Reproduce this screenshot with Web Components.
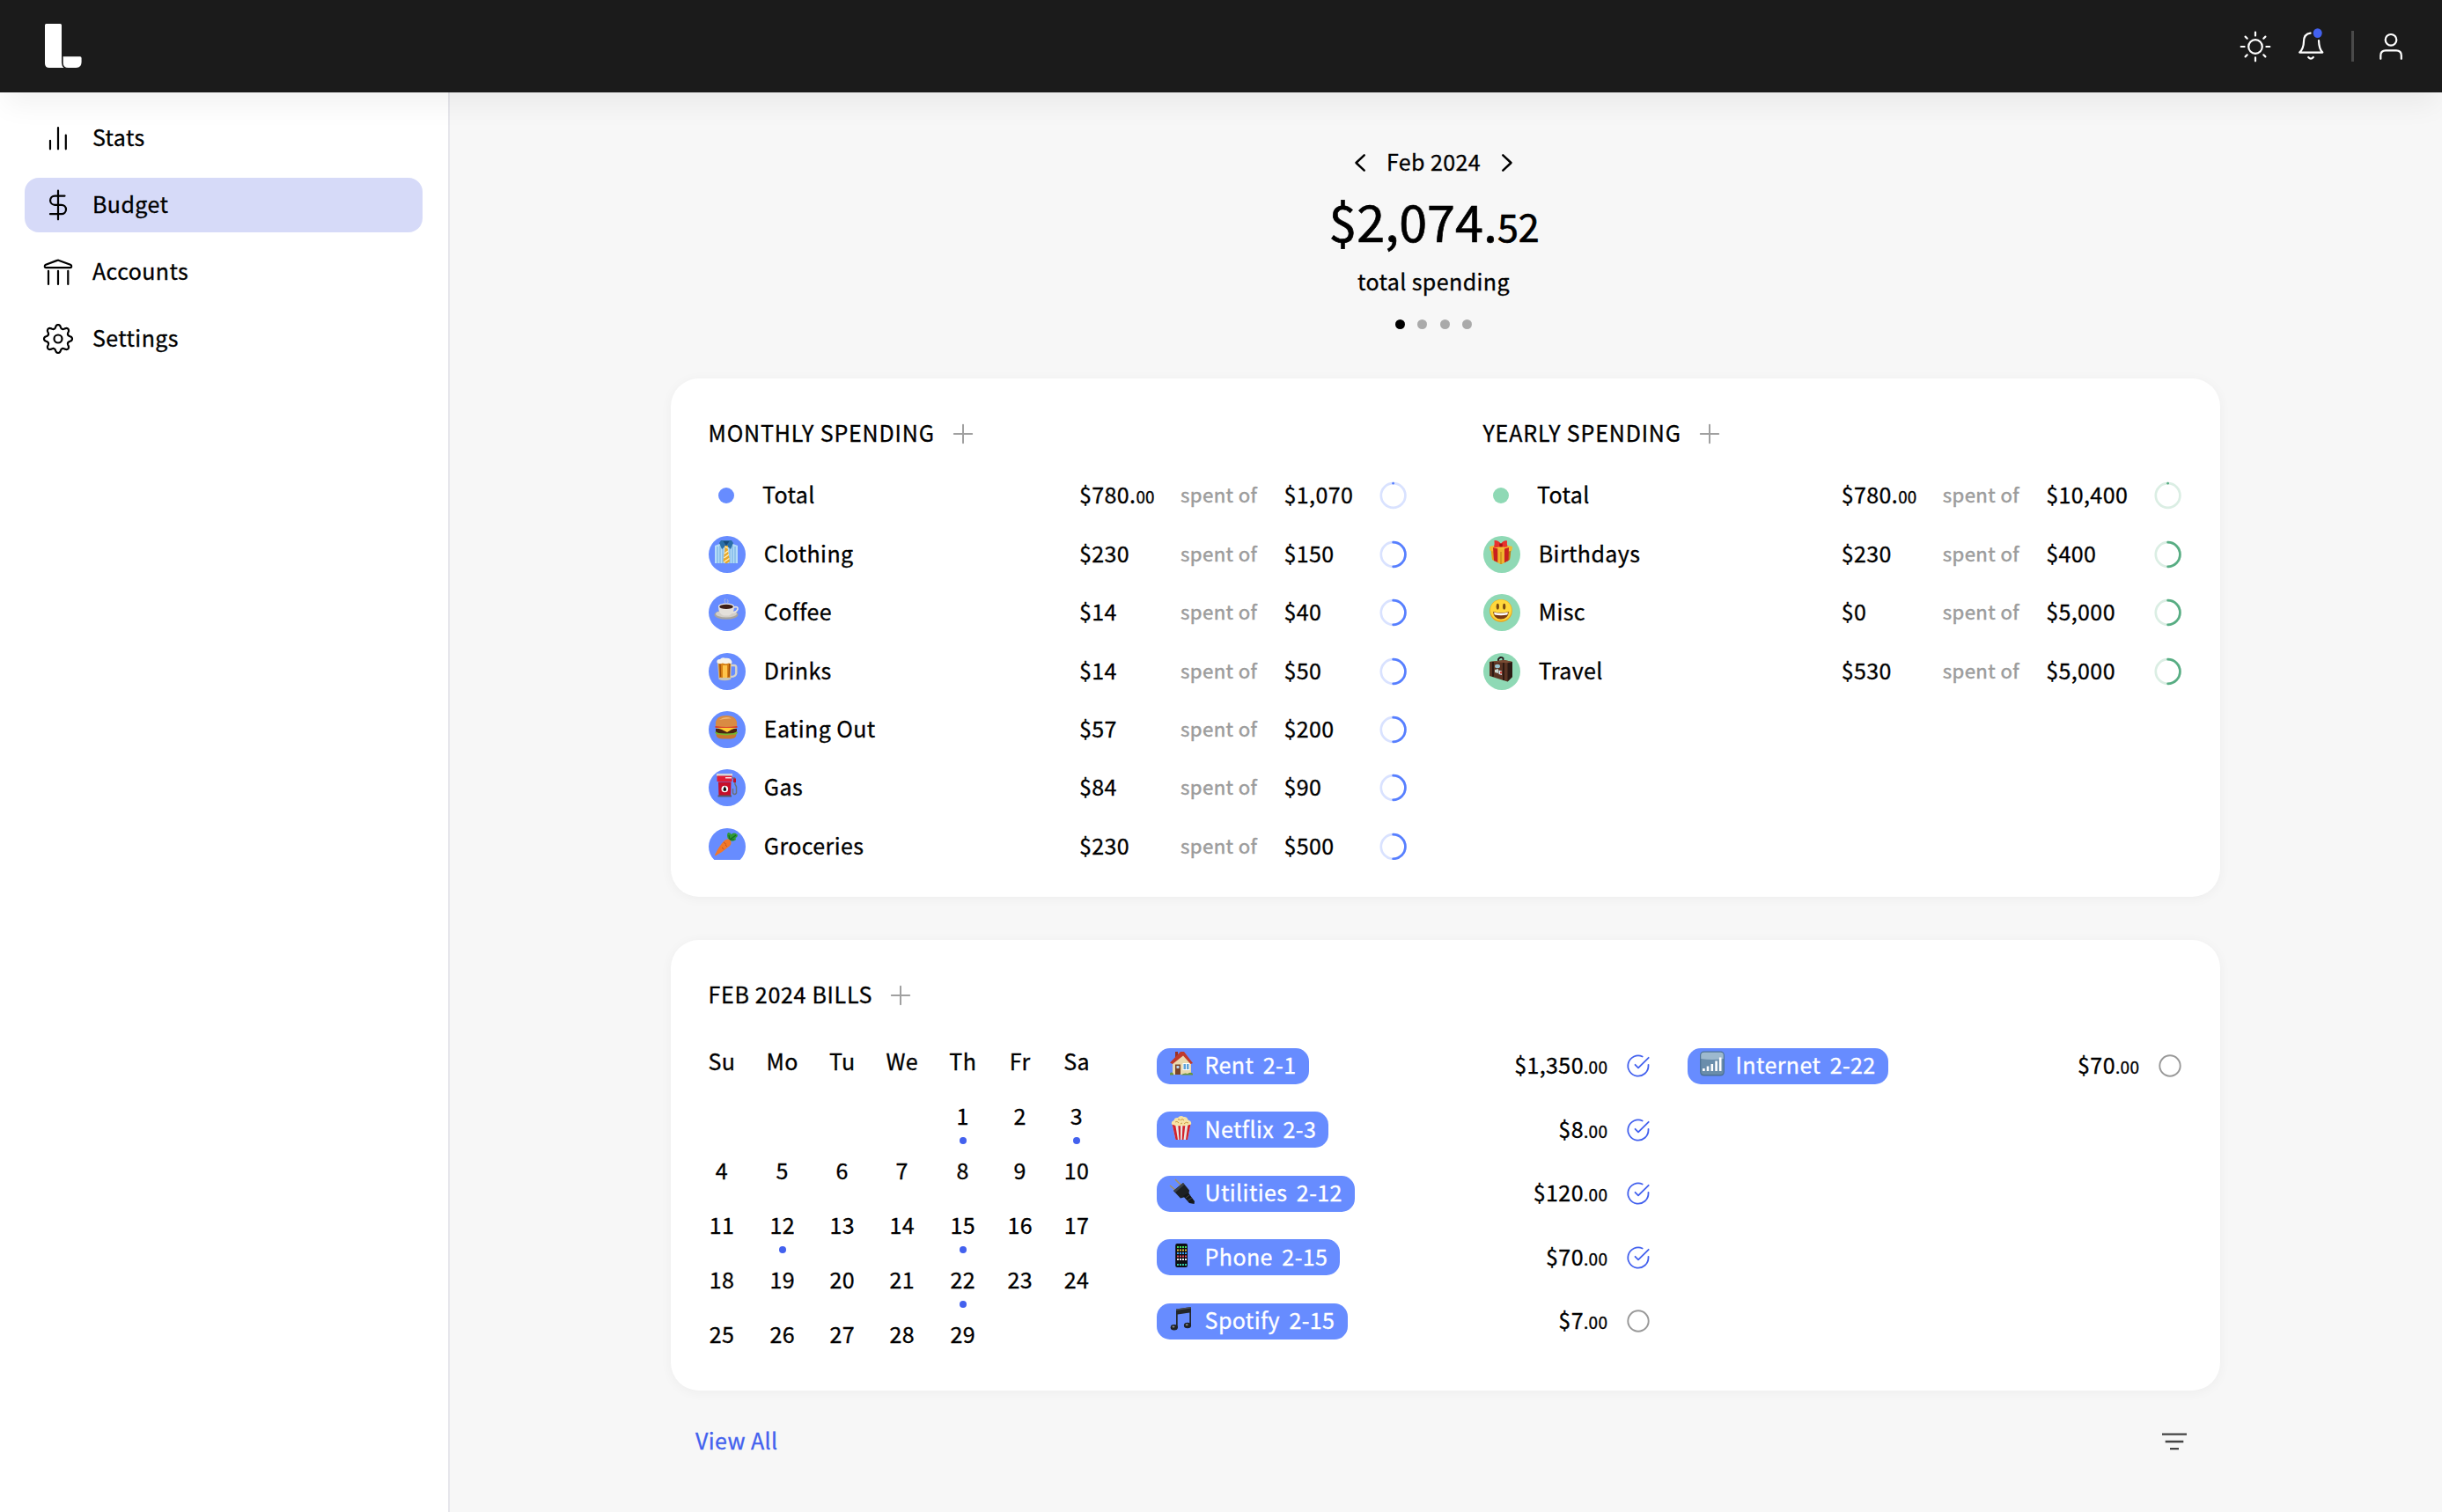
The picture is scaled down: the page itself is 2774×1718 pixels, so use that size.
<!DOCTYPE html>
<html lang="en">
<head>
<meta charset="utf-8">
<title>Budget</title>
<style>
  html, body { margin: 0; height: 100%; }
  body {
    --ink: #000; --muted: #9c9c9c; --accent: #4361ee; --blue: #678cff; --green: #8fd9b5;
    background: #f7f7f7; color: var(--ink);
    font-family: "Noto Sans CJK SC", "Open Sans", sans-serif;
    font-size: 25px; line-height: 30px; letter-spacing: 0.4px;
    -webkit-text-stroke: 0.32px currentColor;
    overflow: hidden;
  }
</style>
</head>
<body>
<budget-app></budget-app>
<script>
const define = (name, css, render) => customElements.define(name, class extends HTMLElement {
  constructor() { super(); this.attachShadow({ mode: 'open' }); }
  connectedCallback() {
    this.shadowRoot.innerHTML = `<style>*{box-sizing:border-box}.t{padding-bottom:4px;white-space:nowrap}${css}</style>${render(this)}`;
  }
});

/* Eight-lobed gear outline around the centre of a 36-unit box */
const gearPath = (() => {
  const pts = [];
  for (let i = 0; i < 160; i++) {
    const a = i / 160 * 2 * Math.PI, w = Math.cos(8 * a);
    const r = 14 + 2 * Math.sign(w) * Math.pow(Math.abs(w), 0.75);
    pts.push((18 + r * Math.sin(a)).toFixed(2) + ' ' + (18 - r * Math.cos(a)).toFixed(2));
  }
  return 'M' + pts.join('L') + 'Z';
})();

const icons = {
  logo: [42, 50, '<path fill="#fff" stroke="none" d="M1.5 0H17.5Q19 0 19 1.5V44Q19 48 21.5 50H5Q0 50 0 45V1.5Q0 0 1.5 0Z"/><path fill="#fff" stroke="none" d="M20.7 37.3H40Q41.6 37.3 41.6 39V43.5Q41.6 50 35.5 50H26.5Q20.7 50 20.7 44Z"/>'],
  stats: [36, 36, '<path d="M9 20.8V30.3M18 6.2V30.3M26.8 14.6V30.3"/>'],
  dollar: [36, 36, '<path d="M18 1.7V34.3M25.5 7.6H14.2a5.1 5.1 0 0 0 0 10.2h7.6a5.1 5.1 0 0 1 0 10.4H9"/>'],
  bank: [36, 36, '<path d="M17 4.9Q18 4.5 19 4.9L32 9.8Q33.4 10.5 33.2 12Q33 13.2 31.8 13.2H4.2Q3 13.2 2.8 12Q2.6 10.5 4 9.8ZM7 16.8V32M18 16.8V32M29.3 16.8V32"/>'],
  gear: [36, 36, `<circle cx="18" cy="18" r="4.5"/><path d="${gearPath}"/>`],
  sun: [36, 36, '<circle cx="18" cy="18" r="7.8"/><path d="M18 1.7V5.6M18 30.4V34.3M1.7 18H5.6M30.4 18H34.3M6.6 6.6L8.7 8.7M27.3 27.3L29.4 29.4M29.4 6.6L27.3 8.7M8.7 27.3L6.6 29.4"/>'],
  bell: [36, 36, '<path d="M17.6 3.6C12.3 4.2 10.1 8 10 13C9.9 18.5 8.3 22.6 5.2 25.6H31.3C28.3 22.5 27.2 18 27 12.1M15.2 31Q18 34.2 20.8 31"/><ellipse cx="25.7" cy="3.6" rx="5" ry="5.4" fill="#4361ee" stroke="none"/>'],
  user: [36, 36, '<circle cx="18" cy="10.3" r="6.3"/><path d="M6.3 31.8V28Q6.3 22.3 12 22.3H24Q29.8 22.3 29.8 28V31.8"/>'],
  left: [12, 20, '<path stroke-width="2.5" d="M10.7 1.4L1.5 10L10.7 18.6"/>'],
  right: [12, 20, '<path stroke-width="2.5" d="M1.3 1.4L10.5 10L1.3 18.6"/>'],
  plus: [24, 24, '<path stroke-width="2" d="M12 1.8V22.2M1.8 12H22.2"/>'],
  done: [28, 28, '<path stroke-width="1.8" d="M25.5 12.8V14A11.6 11.6 0 1 1 18.7 3.5M25.7 4.8L14 16.3L10.5 12.8"/>'],
  open: [28, 28, '<circle cx="14" cy="14" r="11.7" stroke-width="1.9"/>'],
  filter: [30, 20, '<path stroke-width="2.3" stroke-linecap="butt" d="M1 1.7H29M4.7 10H25.3M10 18.2H20"/>'],
};
define('ui-icon', ':host{display:block;flex:none}svg{display:block;fill:none;stroke:currentColor;stroke-width:2.2;stroke-linecap:round;stroke-linejoin:round;overflow:visible}', el => {
  const [w, h, body] = icons[el.getAttribute('name')];
  return `<svg width="${w}" height="${h}" viewBox="0 0 ${w} ${h}">${body}</svg>`;
});

const emoji = {
  shirt: '<path fill="#b5dcf8" d="M0 6L8 3H18L26 6V26H0Z"/><path stroke="#6ba9df" stroke-width="1" d="M3 7V26M6 6V26M9 9V26M17 9V26M20 6V26M23 7V26"/><path fill="#2b6fa8" d="M7 0H19L21 3L18 10L13 6L8 10L5 3Z"/><path fill="#184a78" d="M9.5 1H16.5L13 6Z"/><path fill="#e9a92a" d="M11 6H15L14.6 9L17 24L13 26.5L9.5 24L11.5 9Z"/><path stroke="#fff2c0" stroke-width="1.4" d="M11 15L15 12M10.4 20L16 16M10.5 24.5L16.5 20.5M11.5 7L15 9"/>',
  coffee: '<path stroke="#aab9d8" stroke-width="1" fill="none" d="M12 5Q10 3 12 0M14.5 5Q16 3 14 1"/><ellipse cx="13" cy="18.5" rx="13.5" ry="5.2" fill="#a9a59e"/><ellipse cx="13" cy="17.5" rx="12" ry="4" fill="#d3cfc8"/><path fill="none" stroke="#e6e3de" stroke-width="1.8" d="M21 10Q26.5 8.5 26 12Q25 15.5 20 16"/><path fill="#e4e0da" d="M4 9H22Q22 17 16 19.5H10Q4 17 4 9Z"/><ellipse cx="13" cy="9" rx="9" ry="3.4" fill="#f0ede8"/><ellipse cx="13" cy="9.4" rx="7.8" ry="2.6" fill="#3d1f16"/>',
  beer: '<path fill="none" stroke="#d5d3cb" stroke-width="2.4" d="M18 9H22Q24.5 9 24.3 12V18Q24 22 18 22"/><path fill="#c9c4b4" d="M3 5H19L18.2 25Q11 27.5 4.5 25Z"/><path fill="#d98316" d="M4 5H18L17.3 23H5Z"/><path fill="#ffc44a" d="M9 9H14V23H9Z"/><path stroke="#9e4d09" stroke-width="1.3" d="M6 7L6.6 22M16.6 7L16 22"/><path fill="#f8f3e8" d="M2.5 6Q1.5 2 6 2Q8-.5 12 .8Q18 0 19.5 5Q20 8 16 6.5Q12 8 9 6.5Q5 8 2.5 6Z"/>',
  burger: '<path fill="#c9772f" d="M1.5 20H24.5Q25 26.5 18 26.5H8Q1 26.5 1.5 20Z"/><path fill="#74b72e" d="M0 19Q3 17 6 19.5Q10 17.5 13 20Q17 17.5 20 19.5Q23 17 26 19Q25 22.5 20 21.5L13 22.5L5 21.5Q1 22 0 19Z"/><path fill="#4a2312" d="M1 15H25V18Q23 20.5 13 20.5Q2 20.5 1 18Z"/><path fill="#ffc933" d="M0 13.5H26L19 16L14 19L8 16Z"/><path fill="#d9402b" d="M.5 12H25.5V14H.5Z"/><path fill="#d98b43" d="M1 12Q-.5 0 13 0Q26.5 0 25 12Q13 14 1 12Z"/><path fill="#f0b873" d="M5 5Q12 0 19 3.5Q12 3 5 5Z"/>',
  gas: '<path fill="none" stroke="#6b6f78" stroke-width="1.5" d="M20 5H22.5L23 12L24.5 15V22Q22.5 25 20.5 22V17"/><path fill="#c3102a" d="M21 5.5H24V10H21Z"/><path fill="#d4d6da" d="M2 0H20V3H2Z"/><path fill="#e01e37" d="M2.5 2.5H19.5V9H2.5Z"/><path fill="#fbd9dc" d="M12 4H19V5.5H12Z"/><path fill="#c60f2a" d="M4 9.5H18.5L18 25H4.5Z"/><path fill="#555b66" d="M3.5 24.5H19V26.5H3.5Z"/><circle cx="11.3" cy="17.5" r="3.8" fill="#fff"/><path fill="#111" d="M11.3 14.3Q15 19.8 11.3 20Q7.6 19.8 11.3 14.3Z"/>',
  carrot: '<path fill="#2f9a35" d="M15 7Q13 3 15 0Q18 0 18.5 2Q21-.5 24 1Q24.5 2 26 2.5Q26 5 23.5 6Q25 9 21 9.5Q19 10 17.5 9Z"/><path stroke="#136b23" stroke-width="1.2" d="M17 8L24 3M17 8L16 3M17 8L22 8"/><path fill="#f0782a" d="M11 9Q16 6 18 9.5Q19.5 13 16.5 15.5Q9 22 .5 26.5Q-.5 26 .5 24.5Q5 15 11 9Z"/><path stroke="#c9511a" stroke-width="1" d="M10 11L13 13.5M8 17L10.5 19M14 16L12 14"/>',
  gift: '<path fill="#e3a31b" d="M1.5 10L13 13L24.5 10L23 22L13 27L3 22Z"/><path fill="#b87a0f" d="M13 13L24.5 10L23 22L13 27Z"/><path fill="#f3bb33" d="M0 7L13 4L26 7L25.5 11.5L13 15L.5 11.5Z"/><path fill="#c9201f" d="M4 8L9.5 9.5V25L5 23ZM17 9.5L22 8L21.5 23L17 25.3Z"/><path fill="#efb52f" d="M9.5 10H17V25.5L13 27L9.5 25.5Z"/><path stroke="#b87a0f" stroke-width="1" d="M13 13V27"/><path fill="#e8322e" d="M13 4Q10-.5 5.5 0Q6 4 5 7.5Q10 9 13 6Q16 9 20.5 7Q19.5 4 20 .5Q16-.5 13 4Z"/><path fill="#a81114" d="M11.3 3.5H14.7V7.5H11.3Z"/>',
  smile: '<circle cx="13" cy="13.9" r="12.8" fill="#f0a418"/><circle cx="13" cy="13.2" r="12" fill="#ffd83b"/><ellipse cx="9.3" cy="9.2" rx="1.6" ry="3.4" fill="#7a4a10"/><ellipse cx="16.7" cy="9.2" rx="1.6" ry="3.4" fill="#7a4a10"/><path fill="#7b3b12" d="M4 15Q13 17.5 22 15Q21 23.5 13 23.5Q5 23.5 4 15Z"/><path fill="#fff" d="M5 15.7Q13 17.7 21 15.7L20.3 18.5Q13 20 5.7 18.5Z"/>',
  bag: '<path fill="none" stroke="#24191a" stroke-width="1.8" d="M10 4V2Q12.5-1.5 15.5 1V4"/><path fill="#5b3423" d="M0 5L17 3L26 5V22L20.5 27.5L0 21Z"/><path fill="#2c1a14" d="M20.5 6L26 5V22L20.5 27.5Z"/><path fill="#7a4b33" d="M0 5L17 3L26 5L20.5 6.3Z"/><path stroke="#2b1811" stroke-width="1.8" d="M4 5V22M16 6V26"/><ellipse cx="9" cy="10" rx="3" ry="2.2" fill="#9bc3cf"/><path fill="#c9d8cf" d="M6 14L10 13V18L6 17Z"/><path fill="#d6e3ee" d="M10.5 14.5L14 15.5V20L10.5 19Z"/><path fill="#d0493c" d="M12 16H14V18.5H12Z"/>',
  house: '<path fill="#9a3124" d="M6 0H9V6H6Z"/><path fill="#ead9ae" d="M3 11L14 2L24 12V26H3Z"/><path fill="#c0392b" d="M0 12.5L12 0H16L26 13L23.5 14L15 4.5L3 14Z"/><path fill="#7b4328" d="M6 14.5H12V26H6Z"/><path fill="#b9d9f0" d="M7.5 16H10.5V19H7.5Z"/><path fill="#fff" d="M14.5 13H22.5V21H14.5Z"/><path fill="#5ea2d8" d="M15.5 14H18V20H15.5ZM19 14H21.5V20H19Z"/><path fill="#68953c" d="M0 24.5Q2 22.5 4 25V26.5H0ZM13 26Q17 23.5 20 25Q24 22.5 26 25V26.5H13Z"/>',
  popcorn: '<path fill="#e8e6e4" d="M2.5 9H23.5L20 27H6.5Z"/><path fill="#d3222a" d="M2.5 9H6L9 27H6.5ZM9.2 9H12L12 27H10.5ZM14.5 9H17.5L15.5 27H13.7ZM20.5 9H23.5L20 27H18Z"/><path fill="#f7e3a4" d="M2 9.5Q1 6 4.5 5Q5 1.5 9 2Q12-1.5 15.5 1Q19.5 .5 20.5 4.5Q25 6 24 9.5Q18 12 13 11Q7 12 2 9.5Z"/><path fill="none" stroke="#c99a42" stroke-width="1" d="M6 7Q8 5 10 8M12 5Q14 2 16 5M16 9Q18 6 21 8M9 4Q11 3 11 5M12 9L14 8"/>',
  plug: '<path stroke="#a9935c" stroke-width="1.5" d="M6 0L13 7M0 7L7 13"/><path fill="#1d2024" d="M4 13L15 4L22 12.5L21 19L12 21.5Z"/><path fill="#3b4046" d="M4 13L15 4L16.5 6L6 15Z"/><path fill="#15171a" d="M15 19L21 15.5L28 25L27.5 28L22 27Z"/><path stroke="#444" stroke-width="1" d="M18 21L22.5 17.8M20.3 24L25 21"/>',
  phone: '<rect x="6.2" y="0" width="13.8" height="27" rx="2" fill="#0d0e12"/><g stroke-width="1.9" stroke-dasharray="2 1"><path stroke="#3fd85e" d="M8 4H19"/><path stroke="#e8bd3c" d="M8 7.5H19"/><path stroke="#3a9df0" d="M8 11H19"/><path stroke="#e84b5d" d="M8 14.5H19"/><path stroke="#e9e9f2" d="M8 18H19"/><path stroke="#32c7a5" d="M8 24H19"/></g>',
  music: '<path fill="#23262a" d="M7 2.5L24 0V20.5H22.3V6.5L8.7 8.5V23H7Z"/><path fill="#4b4f55" d="M7 2.5L24 0V1.5L7 4Z"/><ellipse cx="4.8" cy="23.3" rx="4.1" ry="3.2" fill="#202327"/><ellipse cx="20" cy="21" rx="4.1" ry="3.2" fill="#202327"/><ellipse cx="4" cy="22.5" rx="1.5" ry="1" fill="#888"/><ellipse cx="19.2" cy="20.2" rx="1.5" ry="1" fill="#888"/>',
  signal: '<rect x="-.9" y="-.5" width="27.8" height="28" rx="4.5" fill="#4c7192"/><rect x=".3" y=".7" width="25.4" height="25.4" rx="3.5" fill="#6a8dab"/><path fill="#9db9ce" d="M3.5 .7H22.5Q25.7 .7 25.7 4V8Q13 10 .3 8V4Q.3 .7 3.5 .7Z"/><path stroke="#fff" stroke-width="2.6" d="M3.4 22V19M8 22V16.5M12.8 22V14M17.6 22V10.5M22.2 22V6.5"/>',
};
define('emoji-icon', ':host{display:block;flex:none}svg{display:block;overflow:visible}', el =>
  `<svg width="26" height="27" viewBox="0 0 26 27" fill="none">${emoji[el.getAttribute('name')]}</svg>`);

define('app-header', `
  :host{display:flex;align-items:center;height:105px;background:#1b1b1b;color:#fff;padding:0 40px 0 51px;position:relative;z-index:2;box-shadow:0 20px 30px -6px rgba(0,0,0,.055)}
  .tools{margin-left:auto;display:flex;align-items:center}
  .bell{margin-left:27px}.rule{width:3px;height:35px;background:#4a4a4a;margin:0 24px 0 28px}`, () => `
  <ui-icon name="logo" style="margin-bottom:1px"></ui-icon>
  <div class="tools"><ui-icon name="sun"></ui-icon><ui-icon class="bell" name="bell" style="margin-top:-1px"></ui-icon><span class="rule"></span><ui-icon name="user"></ui-icon></div>`);

define('nav-item', `
  :host{display:flex;align-items:center;height:62px;border-radius:16px;padding-left:20.4px;gap:20.6px}
  :host([active]){background:#d6daf8}`, el => `
  <ui-icon name="${el.getAttribute('icon')}"></ui-icon><span class="t"><slot></slot></span>`);

define('app-sidebar', `
  :host{display:flex;flex-direction:column;gap:14px;width:511px;flex:none;background:#fff;border-right:2px solid #e6e6ec;padding:21px 29px 0 28px}`, () => `
  <nav-item icon="stats">Stats</nav-item><nav-item icon="dollar" active>Budget</nav-item><nav-item icon="bank">Accounts</nav-item><nav-item icon="gear">Settings</nav-item>`);

define('month-summary', `
  :host{display:flex;flex-direction:column;align-items:center;padding-right:27px}
  .month{display:flex;align-items:center;height:40px;gap:24px}
  .sum{font-size:57.5px;line-height:90px;letter-spacing:0;padding-left:1px;-webkit-text-stroke:.7px currentColor}.sum small{font-size:43px;line-height:1}
  .label{margin-top:11px;height:30px}
  .dots{display:flex;gap:14.3px;margin-top:26.9px}
  .dots i{width:11px;height:11px;border-radius:50%;background:#aaa}.dots i:first-child{background:#000}`, () => `
  <div class="month"><ui-icon name="left"></ui-icon><span class="t">Feb 2024</span><ui-icon name="right"></ui-icon></div>
  <div class="sum">$2,074.<small>52</small></div>
  <div class="label"><span class="t" style="display:block;margin-top:-2.5px">total spending</span></div>
  <div class="dots"><i></i><i></i><i></i><i></i></div>`);

define('ui-card', `
  :host{display:block;width:1760px;background:#fff;border-radius:32px;padding:48px 44px 42px 42px;box-shadow:0 2px 14px rgba(0,0,0,.045)}`, () => '<slot></slot>');

define('section-title', `
  :host{display:flex;align-items:center;height:30px;gap:20px;padding-left:.5px;letter-spacing:var(--track,.84px)}
  ui-icon{color:#a0a0a0;margin-top:1px}`, () => `
  <span class="t"><slot></slot></span><ui-icon name="plus"></ui-icon>`);

define('progress-ring', ':host{display:block;width:32px;height:32px}svg{display:block;overflow:visible;fill:none;stroke-width:2.7;stroke-linecap:round}', el => {
  const [base, ink] = el.getAttribute('tone') === 'green' ? ['#dbeee4', '#58ad83'] : ['#d9e2ff', '#577fff'];
  const arc = el.hasAttribute('half') ? 'M16.6 2.2A13.8 13.8 0 0 1 16.6 29.8' : 'M16.6 2.2H16.61';
  return `<svg width="32" height="32"><circle cx="16.6" cy="16" r="13.8" stroke="${base}"/><path stroke="${ink}" d="${arc}"/></svg>`;
});

define('spend-row', `
  :host{display:grid;grid-template-columns:var(--cols);align-items:center;height:66.4px}
  .badge{width:42px;height:42px;border-radius:50%;margin-left:1px;background:var(--tone);padding:5px 0 0 6.7px}
  .dot{width:18px;height:18px;border-radius:50%;margin-left:12px;background:var(--tone)}
  small{font-size:18.8px;line-height:1;letter-spacing:.2px}.of{font-size:22.2px;color:var(--muted);-webkit-text-stroke:.5px var(--muted)}
  progress-ring{justify-self:end}`, el => {
  const a = n => el.getAttribute(n), total = !a('icon');
  return `<div>${total ? '<div class="dot"></div>' : `<div class="badge"><emoji-icon name="${a('icon')}"></emoji-icon></div>`}</div>
  <span class="t" style="padding-left:${total ? 0 : 1.8}px">${a('name')}</span>
  <span class="t">${a('spent')}${total ? '<small>00</small>' : ''}</span>
  <span class="t of">spent of</span><span class="t">${a('limit')}</span>
  <progress-ring tone="${a('tone')}" ${total ? '' : 'half'}></progress-ring>`;
});

define('spend-list', `
  :host{display:block;width:794px}
  .rows{height:447px;overflow:hidden;margin-top:22px;padding-top:.3px}
  :host([tone=blue]){--tone:var(--blue);--cols:62px 360px 115px 117.5px 1fr 32px}
  :host([tone=green]){--tone:var(--green);--cols:62px 345.7px 115px 117.5px 1fr 32px}`, el => `
  <section-title>${el.getAttribute('heading')}</section-title>
  <div class="rows"><slot></slot></div>`);

const marked = new Set([1, 3, 12, 15, 22]);
define('bill-calendar', `
  :host{display:grid;grid-template-columns:31px 36px 29.4px 36px 31.4px 28px 30px;column-gap:35.3px;grid-auto-rows:62px;width:454px;flex:none}
  div{display:flex;align-items:center;justify-content:center;position:relative;padding-left:.9px}
  .mark::after{content:"";position:absolute;width:8px;height:8px;border-radius:50%;background:var(--accent);left:calc(50% - 3.5px);top:54.5px}`, () => {
  const cell = (v, m) => `<div class="${m ? 'mark' : ''}"><span class="t">${v}</span></div>`;
  let out = ['Su', 'Mo', 'Tu', 'We', 'Th', 'Fr', 'Sa'].map(d => cell(d)).join('') + '<div></div>'.repeat(4);
  for (let d = 1; d <= 29; d++) out += cell(d, marked.has(d));
  return out;
});

define('bill-item', `
  :host{display:flex;align-items:center;height:72.5px}
  .pill{display:flex;align-items:center;height:41px;border-radius:15px;background:var(--blue);color:#fff;padding:0 14.2px 0 15px}
  emoji-icon{margin:-5px 13.6px 0 0}.date{margin-left:10.5px}
  .amt{margin-left:auto;margin-right:20.5px}small{font-size:19px;line-height:1}
  ui-icon{color:var(--accent)}ui-icon[name=open]{color:#999}`, el => {
  const a = n => el.getAttribute(n);
  return `<div class="pill"><emoji-icon name="${a('icon')}"></emoji-icon><span class="t">${a('name')}</span><span class="t date">${a('date')}</span></div>
  <span class="t amt">${a('amount')}<small>.00</small></span><ui-icon name="${el.hasAttribute('paid') ? 'done' : 'open'}"></ui-icon>`;
});

define('bills-panel', `
  :host{display:block;height:422px}section-title{--track:.7px}.body{display:flex;margin-top:30px}
  .bills{flex:1;display:grid;grid-template-columns:561px 562px;column-gap:42px;margin-left:56px;align-content:start;margin-top:-1px}
  .bills>div{display:block}`, () => `
  <section-title>FEB 2024 BILLS</section-title>
  <div class="body"><bill-calendar></bill-calendar><div class="bills"><div>
    <bill-item icon="house" name="Rent" date="2-1" amount="$1,350" paid></bill-item>
    <bill-item icon="popcorn" name="Netflix" date="2-3" amount="$8" paid></bill-item>
    <bill-item icon="plug" name="Utilities" date="2-12" amount="$120" paid></bill-item>
    <bill-item icon="phone" name="Phone" date="2-15" amount="$70" paid></bill-item>
    <bill-item icon="music" name="Spotify" date="2-15" amount="$7"></bill-item></div><div>
    <bill-item icon="signal" name="Internet" date="2-22" amount="$70"></bill-item></div></div></div>`);

define('list-footer', `
  :host{display:flex;align-items:center;justify-content:space-between;width:1760px;height:30px;padding:0 37.5px 0 28px}
  .t{color:var(--accent)}ui-icon{color:#444;margin-top:1px}`, () => `
  <span class="t">View All</span><ui-icon name="filter"></ui-icon>`);

const monthly = [['', 'Total', '$780.', '$1,070'], ['shirt', 'Clothing', '$230', '$150'], ['coffee', 'Coffee', '$14', '$40'], ['beer', 'Drinks', '$14', '$50'], ['burger', 'Eating Out', '$57', '$200'], ['gas', 'Gas', '$84', '$90'], ['carrot', 'Groceries', '$230', '$500']];
const yearly = [['', 'Total', '$780.', '$10,400'], ['gift', 'Birthdays', '$230', '$400'], ['smile', 'Misc', '$0', '$5,000'], ['bag', 'Travel', '$530', '$5,000']];
const rows = (list, tone) => list.map(([i, n, s, l]) => `<spend-row tone="${tone}" icon="${i}" name="${n}" spent="${s}" limit="${l}"></spend-row>`).join('');

define('budget-app', `
  :host{display:flex;flex-direction:column;height:100vh}
  .shell{display:flex;flex:1;min-height:0}
  main{flex:1;display:flex;flex-direction:column;align-items:center;padding:60px 1px 0 0}
  month-summary{align-self:stretch;margin-bottom:56px}
  .split{display:flex;justify-content:space-between}
  .second{margin-top:49px}list-footer{margin-top:43px}`, () => `
  <app-header></app-header>
  <div class="shell"><app-sidebar></app-sidebar><main>
    <month-summary></month-summary>
    <ui-card><div class="split">
      <spend-list tone="blue" heading="MONTHLY SPENDING">${rows(monthly, 'blue')}</spend-list>
      <spend-list tone="green" heading="YEARLY SPENDING">${rows(yearly, 'green')}</spend-list>
    </div></ui-card>
    <ui-card class="second"><bills-panel></bills-panel></ui-card>
    <list-footer></list-footer>
  </main></div>`);
</script>
</body>
</html>
